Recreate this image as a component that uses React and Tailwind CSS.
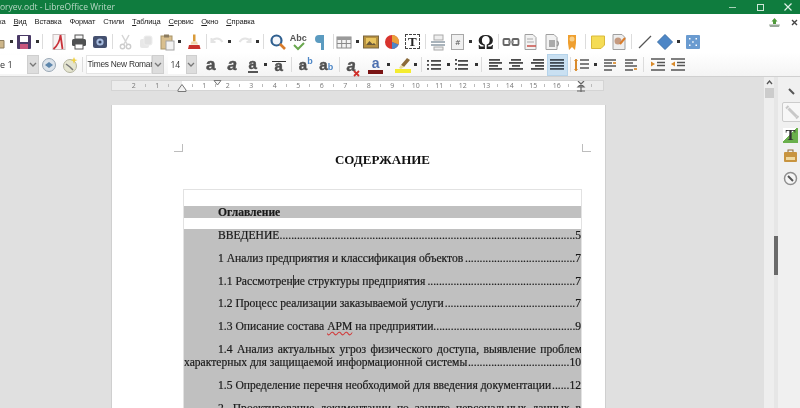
const Svg = ({ children, w = 18, h = 18 }) => (
  <svg width={w} height={h} viewBox="0 0 18 18" className="block">{children}</svg>
);
const B = ({ children, cls = "" }) => (
  <div className={"w-[20.5px] h-full shrink-0 flex items-center justify-center " + cls}>{children}</div>
);
const A = ({ cls = "" }) => (
  <div className={"w-[5.5px] h-full shrink-0 flex items-center justify-center " + cls}>
    <div className="w-[3px] h-[3px] bg-[#333333]" />
  </div>
);
const S = () => (
  <div className="w-[5.5px] h-full shrink-0 flex items-center justify-center">
    <div className="w-px h-[15px] bg-[#dcdcdc]" />
  </div>
);
const Lines = ({ rows, color = "#4a4a4a" }) => (
  <Svg>
    {rows.map(([x, y, w], i) => (
      <rect key={i} x={x} y={y} width={w} height="1.8" fill={color} />
    ))}
  </Svg>
);
const L = ({ children, cls = "" }) => (
  <span className={"font-['Liberation_Sans',sans-serif] leading-none [-webkit-text-stroke:0.5px_#505050] " + cls}>{children}</span>
);
const Menu = ({ u, r }) => (
  <span className="whitespace-nowrap"><span className="underline">{u}</span>{r}</span>
);
const Drop = ({ cls = "" }) => (
  <div className={"h-[19px] bg-[#dddddd] border border-[#cfcfcf] flex items-center justify-center shrink-0 " + cls}>
    <svg width="8" height="5" viewBox="0 0 8 5"><path d="M1 1l3 3 3-3" fill="none" stroke="#777777" strokeWidth="1.3" /></svg>
  </div>
);
const Dots = ({ c }) => (
  <span className="flex-1 min-w-0 text-right whitespace-nowrap">{".".repeat(c)}</span>
);
const Row = ({ text, n, c, cls = "mt-[9.3px]" }) => (
  <div className={"flex pl-[34px] h-[13.5px] leading-[13.5px] " + cls}>
    <span className="whitespace-nowrap">{text}</span>
    <Dots c={c} />
    <span>{n}</span>
  </div>
);
const nums = ["2", "1", "", "1", "2", "3", "4", "5", "6", "7", "8", "9", "10", "11", "12", "13", "14", "15", "16", ""];

export default function App() {
  return (
    <div className="w-[800px] h-[408px] overflow-hidden flex flex-col bg-[#e0e0e0] font-['Open_Sans',sans-serif] blur-[0.35px]">
      <div className="h-[14px] shrink-0 bg-[#0f7c3e] flex items-center justify-between pr-[7px] text-[#b9d8c6]">
        <span className="text-[8.5px] leading-none whitespace-nowrap">oryev.odt - LibreOffice Writer</span>
        <div className="flex items-center gap-[19px]">
          <div className="w-[7px] h-px bg-[#a8d2b8] mr-[2px]" />
          <div className="w-[7px] h-[7px] border border-[#cfe6d8]" />
          <svg width="10" height="10" viewBox="0 0 10 10"><path d="M1.5 1.5l7 7M8.5 1.5l-7 7" stroke="#dff0e6" strokeWidth="1.2" /></svg>
        </div>
      </div>

      <div className="h-[16px] shrink-0 bg-white flex items-center justify-between pr-[2px] text-[7.6px] tracking-[-0.2px] text-[#222222] font-['Liberation_Sans',sans-serif]">
        <div className="flex gap-[8px] -ml-[19px] leading-none">
          <span>Правка</span>
          <Menu u="В" r="ид" />
          <span>Вставка</span>
          <span>Формат</span>
          <span>Стили</span>
          <Menu u="Т" r="аблица" />
          <Menu u="С" r="ервис" />
          <Menu u="О" r="кно" />
          <Menu u="С" r="правка" />
        </div>
        <div className="flex items-center gap-[10px]">
          <svg width="13" height="11" viewBox="0 0 13 11"><path d="M6.5 1l3 3.5H8V7H5V4.5H3.5z" fill="#4f9a3a" /><path d="M1 7.5h11L11 10H2z" fill="#9aa89a" /></svg>
          <svg width="7" height="7" viewBox="0 0 7 7"><path d="M1 1l5 5M6 1L1 6" stroke="#444444" strokeWidth="1.4" /></svg>
        </div>
      </div>

      <div className="h-[23px] shrink-0 bg-white flex items-center -ml-[12px]">
        <B>
          <Svg><path d="M2 6h5l1 1.5h7V15H2z" fill="#cdb68a" stroke="#8c7c5e" /></Svg>
        </B>
        <A />
        <B>
          <Svg><rect x="2" y="2" width="14" height="14" rx="1" fill="#4a3a66" /><rect x="5" y="3" width="8" height="6" fill="#ffffff" /><rect x="5" y="11" width="8" height="5" fill="#c8557c" /></Svg>
        </B>
        <A />
        <S />
        <B cls="ml-[3px]">
          <Svg><rect x="3" y="1.5" width="12" height="15" fill="#f7f3f3" stroke="#c9c0c0" /><path d="M3.5 16C7 13 10 7 10.5 2M10.5 2l2 14" fill="none" stroke="#c9323a" strokeWidth="1.8" /></Svg>
        </B>
        <B>
          <Svg><rect x="5" y="2" width="8" height="4" fill="#f5f5f5" stroke="#555555" /><rect x="2" y="6" width="14" height="7" rx="1.5" fill="#4f5152" /><rect x="5" y="11" width="8" height="5" fill="#ffffff" stroke="#555555" /></Svg>
        </B>
        <B>
          <Svg><rect x="2" y="3" width="14" height="12" rx="2" fill="#44506f" /><circle cx="9" cy="9" r="3.6" fill="#a8bde0" /><circle cx="9" cy="9" r="1.6" fill="#33415f" /></Svg>
        </B>
        <S />
        <B>
          <Svg><path d="M5 2l5 9M12 2l-5 9" stroke="#d5d5d5" strokeWidth="1.5" /><circle cx="5.5" cy="13.5" r="2.2" fill="none" stroke="#cccccc" strokeWidth="1.4" /><circle cx="11.5" cy="13.5" r="2.2" fill="none" stroke="#cccccc" strokeWidth="1.4" /></Svg>
        </B>
        <B>
          <Svg><rect x="3" y="6" width="9" height="9" rx="2" fill="#e8e8e8" /><rect x="7" y="3" width="8" height="9" rx="2" fill="#e2e2e2" stroke="#eeeeee" /></Svg>
        </B>
        <B>
          <Svg><rect x="3" y="3" width="11" height="13" fill="#d9bf8e" stroke="#a89468" /><rect x="6" y="1.5" width="5" height="3" fill="#8b7b5f" /><rect x="8" y="8" width="8" height="9" fill="#f3f3f3" stroke="#a5a5a5" /></Svg>
        </B>
        <A />
        <B cls="ml-[1px]">
          <Svg><rect x="8" y="1.5" width="2.5" height="7" fill="#d99b3a" /><path d="M6.5 8.5h5.5l1 3H5.5z" fill="#f0d9b0" /><path d="M4 12h10.5l1 4H3z" fill="#c8322c" /></Svg>
        </B>
        <S />
        <B cls="-ml-[3px]">
          <Svg><path d="M3.5 8.5c3-4 8-4 11 .5M3.5 5v4h4" fill="none" stroke="#e4e4e4" strokeWidth="2" /></Svg>
        </B>
        <A />
        <div className="w-[2px]" />
        <B>
          <Svg><path d="M14.5 8.5c-3-4-8-4-11 .5M14.5 5v4h-4" fill="none" stroke="#e4e4e4" strokeWidth="2" /></Svg>
        </B>
        <A />
        <S />
        <B cls="ml-[2px]">
          <Svg><circle cx="7.5" cy="7.5" r="5" fill="#f4f6fa" stroke="#2f5f8f" strokeWidth="2.2" /><path d="M11 11l5 5" stroke="#d97c2a" strokeWidth="2.6" /></Svg>
        </B>
        <B>
          <div className="relative w-[18px] h-[18px]">
            <span className="absolute left-0 top-0 text-[9px] font-bold leading-[10px] text-[#555555] font-['Liberation_Sans',sans-serif]">Abc</span>
            <svg width="18" height="18" viewBox="0 0 18 18" className="absolute left-0 top-0"><path d="M4 12l4 4 6-6" fill="none" stroke="#6aa84f" strokeWidth="2" /></svg>
          </div>
        </B>
        <B cls="ml-[1px]">
          <Svg><path d="M10 2H8a4 4 0 0 0 0 8h2v7h3V2z" fill="#5b9bc0" /></Svg>
        </B>
        <S />
        <B cls="-ml-[2px]">
          <Svg>
            <rect x="2" y="4" width="14" height="11" fill="#f3f3f3" stroke="#8a8a8a" />
            <rect x="2" y="4" width="14" height="3" fill="#9a9a9a" />
            <path d="M2 10.5h14M6.7 7v8M11.3 7v8" stroke="#8a8a8a" />
          </Svg>
        </B>
        <A />
        <B cls="ml-[1px]">
          <Svg><rect x="1.5" y="3" width="15" height="12" fill="#b8923f" stroke="#7a6640" /><rect x="4" y="5" width="10" height="7" fill="#e9c55f" /><path d="M4 12l3.5-4 3 3 1.5-1 2 2z" fill="#6b5a3a" /></Svg>
        </B>
        <B>
          <Svg><circle cx="9" cy="9" r="7" fill="#d8342e" /><path d="M9 9V2a7 7 0 0 1 6.5 9.5z" fill="#e9a13b" /><path d="M9 9l6.5 2.5A7 7 0 0 1 9 16z" fill="#4d87c7" /></Svg>
        </B>
        <B>
          <div className="w-[15px] h-[15px] border border-dashed border-[#444444] flex items-center justify-center">
            <span className="font-['Liberation_Serif',serif] font-bold text-[13px] leading-none text-[#222222]">T</span>
          </div>
        </B>
        <S />
        <B>
          <Svg><rect x="5" y="2" width="9" height="5" fill="#eeeeee" stroke="#aaaaaa" /><path d="M2 9h14M2 12h14" stroke="#8d9aa5" strokeWidth="1.5" /><rect x="5" y="14" width="9" height="3" fill="#eeeeee" stroke="#aaaaaa" /></Svg>
        </B>
        <B cls="-ml-[1px]">
          <div className="relative w-[13px] h-[16px] border border-[#a8a8a8] bg-[#f0f0f0] flex items-center justify-center text-[8px] leading-none text-[#555555]">#</div>
        </B>
        <A />
        <B cls="ml-[2px]">
          <span className="font-['Liberation_Serif',serif] font-bold text-[20px] leading-none text-[#222222]">Ω</span>
        </B>
        <S />
        <B cls="-ml-[1px]">
          <Svg><rect x="1.5" y="6" width="6" height="6" rx="1" fill="none" stroke="#666666" strokeWidth="1.8" /><rect x="10.5" y="6" width="6" height="6" rx="1" fill="none" stroke="#666666" strokeWidth="1.8" /><path d="M6 9h6" stroke="#999999" strokeWidth="1.5" /></Svg>
        </B>
        <B>
          <Svg><path d="M3 1.5h8l3 3v12H3z" fill="#f2f2f2" stroke="#a0a0a0" /><path d="M5 6h6M5 9h7" stroke="#aaaaaa" /><path d="M5 13h9" stroke="#c9504a" strokeWidth="1.5" /></Svg>
        </B>
        <B>
          <Svg><path d="M3 1.5h8l3 3v12H3z" fill="#f2f2f2" stroke="#a0a0a0" /><rect x="6" y="7" width="6" height="7" fill="#aaaaaa" /><path d="M14 8a3 3 0 0 1 0 5" fill="none" stroke="#999999" strokeWidth="1.5" /></Svg>
        </B>
        <B>
          <Svg><path d="M5 2h8v8l-1 7-3-3-3 3-1-7z" fill="#ef9f2f" /><circle cx="9" cy="6" r="2.5" fill="#f8d089" /></Svg>
        </B>
        <S />
        <B>
          <Svg><path d="M2.5 3h13v9l-3.5 3.5H2.5z" fill="#f5dc55" stroke="#d9b93a" /></Svg>
        </B>
        <B>
          <Svg><path d="M3 1.5h9l3 3v12H3z" fill="#eeeeee" stroke="#a0a0a0" /><circle cx="8" cy="8" r="3.5" fill="#c49a80" /><path d="M10 11l5-6" stroke="#d97c2a" strokeWidth="2" /></Svg>
        </B>
        <S />
        <B>
          <Svg><path d="M3 15L15 3" stroke="#555555" strokeWidth="1.3" /></Svg>
        </B>
        <B>
          <Svg><path d="M9 1.5L16.5 9 9 16.5 1.5 9z" fill="#4d86c6" stroke="#3b6fa8" /></Svg>
        </B>
        <A />
        <B cls="ml-[2px]">
          <Svg><rect x="2" y="2" width="14" height="14" rx="1" fill="#6a9bd0" /><path d="M5 5h1.5v1.5H5zM11.5 5H13v1.5h-1.5zM5 11.5h1.5V13H5zM11.5 11.5H13V13h-1.5zM8.2 8.2h1.5v1.5H8.2z" fill="#ffffff" /></Svg>
        </B>
      </div>

      <div className="h-[24px] shrink-0 bg-gradient-to-b from-white to-[#f4f4f4] border-b border-[#d0d0d0] flex items-center">
        <div className="w-[27px] h-[19px] bg-white text-[9px] leading-[19px] text-[#333333] overflow-hidden whitespace-nowrap text-right pr-[17px]">е 1</div>
        <Drop cls="w-[12px]" />
        <B>
          <Svg><circle cx="9" cy="9" r="6.5" fill="#dce3ea" stroke="#9aa8b5" /><path d="M5 9l4-3 4 3-4 3z" fill="#5d86ac" /></Svg>
        </B>
        <B>
          <Svg><circle cx="9" cy="10" r="6.5" fill="#e5e5d0" stroke="#b5b5a0" /><path d="M5 8l4 3 3 3" stroke="#777777" strokeWidth="1.5" fill="none" /><path d="M13 1l1 2.5L16.5 4 14 5l-1 3-1-3-2.5-1L12 3.5z" fill="#f0d040" /></Svg>
        </B>
        <S />
        <div className="w-[66px] h-[19px] bg-white border border-[#e4e4e4] font-['Liberation_Sans',sans-serif] text-[8.4px] tracking-[-0.25px] leading-[17px] text-[#333333] pl-[1px] whitespace-nowrap shrink-0">Times New Roman</div>
        <Drop cls="w-[12px]" />
        <div className="w-[4px] shrink-0" />
        <div className="w-[18px] h-[19px] bg-white text-[8.5px] leading-[19px] text-[#333333] pl-[3px] shrink-0">14</div>
        <Drop cls="w-[11px]" />
        <div className="w-[4px] shrink-0" />
        <B><L cls="font-bold text-[17px] text-[#505050]">a</L></B>
        <B cls="ml-[1px]"><L cls="font-bold italic text-[17px] text-[#505050]">a</L></B>
        <B>
          <div className="flex flex-col items-center">
            <L cls="font-bold text-[15px] text-[#505050]">a</L>
            <div className="w-[10px] h-[2px] bg-[#555555]" />
          </div>
        </B>
        <A />
        <B>
          <div className="relative">
            <L cls="font-bold text-[15px] text-[#505050]">a</L>
            <div className="absolute left-[-3px] right-[-3px] top-[8px] h-px bg-[#333333]" />
          </div>
        </B>
        <S />
        <B cls="ml-[1px]"><div className="flex items-start"><L cls="font-bold text-[15px] text-[#505050]">a</L><span className="font-['Liberation_Sans',sans-serif] font-bold text-[9px] leading-none text-[#4d86c6]">b</span></div></B>
        <B><div className="flex items-end"><L cls="font-bold text-[15px] text-[#505050]">a</L><span className="font-['Liberation_Sans',sans-serif] font-bold text-[9px] leading-none text-[#4d86c6]">b</span></div></B>
        <S />
        <B cls="-ml-[1px]">
          <div className="relative">
            <L cls="font-bold italic text-[16px] text-[#505050]">a</L>
            <svg width="7" height="7" viewBox="0 0 7 7" className="absolute right-[-4px] bottom-0"><path d="M1 1l5 5M6 1L1 6" stroke="#d0302a" strokeWidth="1.8" /></svg>
          </div>
        </B>
        <div className="w-[4px]" />
        <B>
          <div className="flex flex-col items-center">
            <span className="font-['Liberation_Sans',sans-serif] font-bold text-[14px] leading-none text-[#4d70b0]">a</span>
            <div className="w-[15px] h-[4px] bg-[#7a1414]" />
          </div>
        </B>
        <A />
        <B cls="ml-[1px]">
          <Svg><path d="M13 2l3 2-6 7-3-2z" fill="#8a6a3a" /><path d="M7 9l3 2-3 2-2-1z" fill="#e8d8a0" /><rect x="1" y="13" width="16" height="4" fill="#f4ec30" /></Svg>
        </B>
        <A />
        <S />
        <B>
          <Lines rows={[[2, 4, 2], [6, 4, 10], [2, 8, 2], [6, 8, 10], [2, 12, 2], [6, 12, 10]]} />
        </B>
        <A cls="ml-[1px]" />
        <B>
          <Lines rows={[[3, 3, 2], [6, 4, 10], [3, 7, 2], [6, 8, 10], [3, 12, 2], [6, 12, 10]]} />
        </B>
        <A cls="ml-[2px]" />
        <S />
        <B><Lines rows={[[3, 3, 11], [3, 6, 13], [3, 9, 9], [3, 12, 13]]} /></B>
        <B cls="ml-[1px]"><Lines rows={[[4, 3, 10], [2, 6, 14], [5, 9, 8], [2, 12, 14]]} /></B>
        <B><Lines rows={[[5, 3, 11], [3, 6, 13], [7, 9, 9], [3, 12, 13]]} /></B>
        <div className="w-[20.5px] h-[22px] shrink-0 bg-[#c9e0f2] border border-[#b5d3ea] flex items-center justify-center">
          <Lines rows={[[2, 3, 14], [2, 6, 14], [2, 9, 14], [2, 12, 14]]} color="#3f4a55" />
        </div>
        <S />
        <B cls="-ml-[1px]">
          <Svg><path d="M3 4v10" stroke="#d98a2a" strokeWidth="2" /><path d="M1.5 5L3 3l1.5 2M1.5 13L3 15l1.5-2" fill="none" stroke="#d98a2a" /><path d="M7 4h9M7 8h9M7 12h9" stroke="#555555" strokeWidth="1.7" /></Svg>
        </B>
        <A />
        <B cls="ml-[2px]">
          <Svg><path d="M3 4h12M3 7h8M3 10h12M3 14h8" stroke="#555555" strokeWidth="1.7" /><path d="M12 7h3" stroke="#d98a2a" strokeWidth="1.7" /></Svg>
        </B>
        <B>
          <Svg><path d="M3 4h12M3 7h8M3 10h12M3 14h8" stroke="#555555" strokeWidth="1.7" /><path d="M12 13h3" stroke="#d98a2a" strokeWidth="1.7" /></Svg>
        </B>
        <S />
        <B cls="ml-[1px]">
          <Svg><path d="M2 3h14M8 6.5h8M8 9.5h8M2 14h14" stroke="#555555" strokeWidth="1.7" /><path d="M2 5.5L6 8l-4 2.5z" fill="#d98a2a" /></Svg>
        </B>
        <B>
          <Svg><path d="M2 3h14M8 6.5h8M8 9.5h8M2 14h14" stroke="#555555" strokeWidth="1.7" /><path d="M6 5.5L2 8l4 2.5z" fill="#d98a2a" /></Svg>
        </B>
      </div>

      <div className="flex-1 min-h-0 flex">
        <div className="flex-1 min-w-0 flex flex-col overflow-hidden pl-[111px]">
          <div className="relative mt-[3px] w-[493px] h-[11px] shrink-0 pl-[10px] flex border border-[#d4d4d4] bg-[linear-gradient(to_right,#ececec_70px,#ffffff_70px,#ffffff_468px,#ececec_468px)]">
            {nums.map((n, i) => (
              <div key={i} className="relative w-[23.5px] shrink-0 text-center text-[7px] leading-[9px] text-[#777777] font-['Open_Sans',sans-serif]">
                {n}
                <span className="absolute right-0 top-[3px] w-px h-[3px] bg-[#bbbbbb]" />
              </div>
            ))}
            <svg width="10" height="8" viewBox="0 0 10 8" className="absolute left-[65px] top-[3px]"><path d="M5 .5L9 6v1.5H1V6z" fill="#f2f2f2" stroke="#777777" /></svg>
            <svg width="9" height="6" viewBox="0 0 9 6" className="absolute left-[101px] top-[-1px]"><path d="M1 .5h7L4.5 5z" fill="#f5f5f5" stroke="#777777" /></svg>
            <svg width="10" height="11" viewBox="0 0 10 11" className="absolute left-[464px] top-0"><path d="M2 0l6 6H2l6-6M5 3v8M1 10h8" fill="none" stroke="#666666" strokeWidth="1.2" /></svg>
          </div>
          <div className="mt-[14px] w-[495px] flex-1 bg-white border-l border-r border-[#cfcfcf] relative">
            <div className="absolute left-[62px] top-[39px] w-[9px] h-[8px] border-r border-b border-[#bdbdbd]" />
            <div className="absolute left-[470px] top-[39px] w-[9px] h-[8px] border-l border-b border-[#bdbdbd]" />
            <div className="pt-[47px] pl-[48px] text-center font-['Liberation_Serif',serif] font-bold text-[13px] leading-[15px] text-[#111111]">СОДЕРЖАНИЕ</div>
            <div className="mt-[22px] ml-[71px] w-[399px] border border-[#e2e2e2] border-b-0 font-['Liberation_Serif',serif] text-[11.6px] text-[#1a1a1a] [-webkit-text-stroke:0.2px_#1a1a1a]">
              <div className="h-[16px]" />
              <div className="h-[12px] bg-[#c0c0c0] pl-[34px] leading-[13px] font-bold">Оглавление</div>
              <div className="h-[11px]" />
              <div className="bg-[#c0c0c0] h-[300px] overflow-hidden">
                <Row text="ВВЕДЕНИЕ" n="5" c={102} cls="" />
                <Row text="1 Анализ предприятия и классификация объектов" n="7" c={38} />
                <Row
                  text={<>1.1 Рассмотрен<span className="inline-block w-0 h-[13px] border-l border-[#333333] align-middle" />ие структуры предприятия</>}
                  n="7"
                  c={51}
                />
                <Row text="1.2 Процесс реализации заказываемой услуги" n="7" c={45} />
                <Row
                  text={<>1.3 Описание состава <span className="underline decoration-wavy decoration-[#d04040]">АРМ</span> на предприятии</>}
                  n="9"
                  c={49}
                />
                <div className="mt-[9.3px] pl-[34px] h-[13.5px] leading-[13.5px] whitespace-nowrap [text-align-last:justify] w-[398px]">1.4 Анализ актуальных угроз физического доступа, выявление проблем</div>
                <div className="flex h-[13.5px] leading-[13.5px]">
                  <span className="whitespace-nowrap">характерных для защищаемой информационной системы</span>
                  <Dots c={35} />
                  <span>10</span>
                </div>
                <Row text="1.5 Определение перечня необходимой для введения документации" n="12" c={6} />
                <div className="mt-[9.3px] pl-[34px] h-[13.5px] leading-[13.5px] whitespace-nowrap [text-align-last:justify]">2. Проектирование документации по защите персональных данных в</div>
              </div>
            </div>
          </div>
        </div>
        <div className="w-[10px] shrink-0 bg-[#eeeeee] flex flex-col items-center pt-[3px]">
          <svg width="7" height="5" viewBox="0 0 7 5"><path d="M1 4l2.5-3L6 4" fill="none" stroke="#555555" strokeWidth="1.3" /></svg>
          <div className="mt-[3px] w-[9px] h-[10px] bg-[#cccccc]" />
        </div>
        <div className="w-[4px] shrink-0 bg-[#e6e6e6] flex flex-col pt-[159px]">
          <div className="h-[39px] bg-[#6a6a6a]" />
        </div>
        <div className="w-[22px] shrink-0 bg-[#f0f0f0] flex flex-col items-start pl-[5px] pt-[10px]">
          <svg width="9" height="9" viewBox="0 0 9 9" className="ml-[4px]"><path d="M2 2l5 5" stroke="#555555" strokeWidth="2" /></svg>
          <div className="mt-[6px] -ml-[1px] w-[20px] h-[20px] bg-[#f7f7f7] border border-[#cccccc] rounded-[2px] flex items-center justify-center">
            <svg width="15" height="15" viewBox="0 0 15 15"><path d="M3.5 3.5l8 8" stroke="#c8c8c8" strokeWidth="3" /><path d="M1 3.5L3.5 1M11 13.5l2.5-2.5" stroke="#c8c8c8" strokeWidth="2" /></svg>
          </div>
          <div className="mt-[6px] w-[15px] h-[15px] bg-[linear-gradient(135deg,#ffffff_45%,#6ab04c_45%)] flex items-center justify-center">
            <span className="font-['Liberation_Serif',serif] font-bold text-[15px] leading-none text-[#333333]">T</span>
          </div>
          <svg width="15" height="15" viewBox="0 0 15 15" className="mt-[6px]"><rect x="5" y="1" width="5" height="3" fill="none" stroke="#8a6a3a" /><rect x="1" y="3" width="13" height="10" rx="1" fill="#c8943f" /><rect x="3" y="8" width="9" height="3" fill="#f0d9a0" /></svg>
          <svg width="15" height="15" viewBox="0 0 15 15" className="mt-[7px]"><circle cx="7.5" cy="7.5" r="6" fill="#f5f5f5" stroke="#8f8f8f" strokeWidth="1.5" /><path d="M5 5l5 5" stroke="#555555" strokeWidth="2" /></svg>
        </div>
      </div>
    </div>
  );
}
